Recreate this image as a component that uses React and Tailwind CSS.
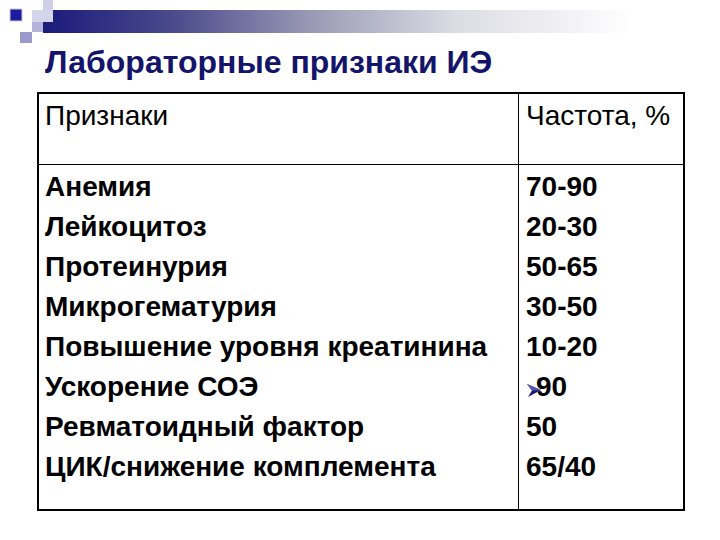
import React from "react";

const rows = [
  ["Анемия", "70-90"],
  ["Лейкоцитоз", "20-30"],
  ["Протеинурия", "50-65"],
  ["Микрогематурия", "30-50"],
  ["Повышение уровня креатинина", "10-20"],
  ["Ускорение СОЭ", ">90"],
  ["Ревматоидный фактор", "50"],
  ["ЦИК/снижение комплемента", "65/40"],
];

function Corner() {
  return (
    <svg width="720" height="44" viewBox="0 0 720 44" className="block">
      <defs>
        <linearGradient id="bar" x1="0" y1="0" x2="1" y2="0">
          <stop offset="0" stopColor="#1a1a7c" />
          <stop offset="0.22" stopColor="#4a4a8c" />
          <stop offset="0.45" stopColor="#9898b4" />
          <stop offset="0.7" stopColor="#dcdce4" />
          <stop offset="1" stopColor="#ffffff" />
        </linearGradient>
      </defs>
      <rect x="43" y="10" width="590" height="23" fill="url(#bar)" />
      <rect x="43" y="0" width="10" height="10" fill="#cfcfe6" />
      <rect x="32" y="10" width="21" height="12" fill="#d4d4ea" />
      <rect x="32" y="22" width="11" height="10" fill="#b4b4da" />
      <rect x="20" y="32" width="12" height="11" fill="#9a9acc" />
      <rect x="10" y="9" width="12" height="12" fill="#1c1c9c" stroke="#c8c8e8" strokeWidth="1" />
    </svg>
  );
}

function Arrow() {
  return (
    <svg width="16" height="16" viewBox="0 0 16 16" className="inline-block -mr-[6px] relative top-[3px]">
      <path d="M1 2 L15 8 L2 15 L6 8.5 Z" fill="#1c1c7c" />
      <path d="M1 2 L15 8 L6 8.5 Z" fill="#5a5aa8" />
    </svg>
  );
}

export default function App() {
  return (
    <div
      className="w-[720px] h-[540px] bg-white overflow-hidden text-black"
      style={{ fontFamily: '"Liberation Sans", Arial, sans-serif' }}
    >
      <Corner />
      <h1 className="ml-[45px] mt-[0px] text-[32px] leading-[36px] font-bold text-[#14146a]">
        Лабораторные признаки ИЭ
      </h1>
      <div className="ml-[37px] mt-[12px] w-[648px] h-[419px] border-2 border-black grid grid-cols-[480px_1fr] grid-rows-[71px_1fr]">
        <div className="border-r border-b border-black pl-[6px] pt-[6px] text-[28px] leading-[32px]">
          Признаки
        </div>
        <div className="border-b border-black pl-[7px] pt-[6px] text-[28px] leading-[32px]">
          Частота, %
        </div>
        <div className="border-r border-black pl-[6px] pt-[2px] flex flex-col">
          {rows.map(([a]) => (
            <div key={a} className="h-[40px] flex items-center text-[28px] font-bold whitespace-nowrap">
              {a}
            </div>
          ))}
        </div>
        <div className="pl-[7px] pt-[2px] flex flex-col">
          {rows.map(([a, b]) => (
            <div key={a} className="h-[40px] flex items-center text-[28px] font-bold">
              {b.startsWith(">") ? (
                <>
                  <Arrow />
                  {b.slice(1)}
                </>
              ) : (
                b
              )}
            </div>
          ))}
        </div>
      </div>
    </div>
  );
}
